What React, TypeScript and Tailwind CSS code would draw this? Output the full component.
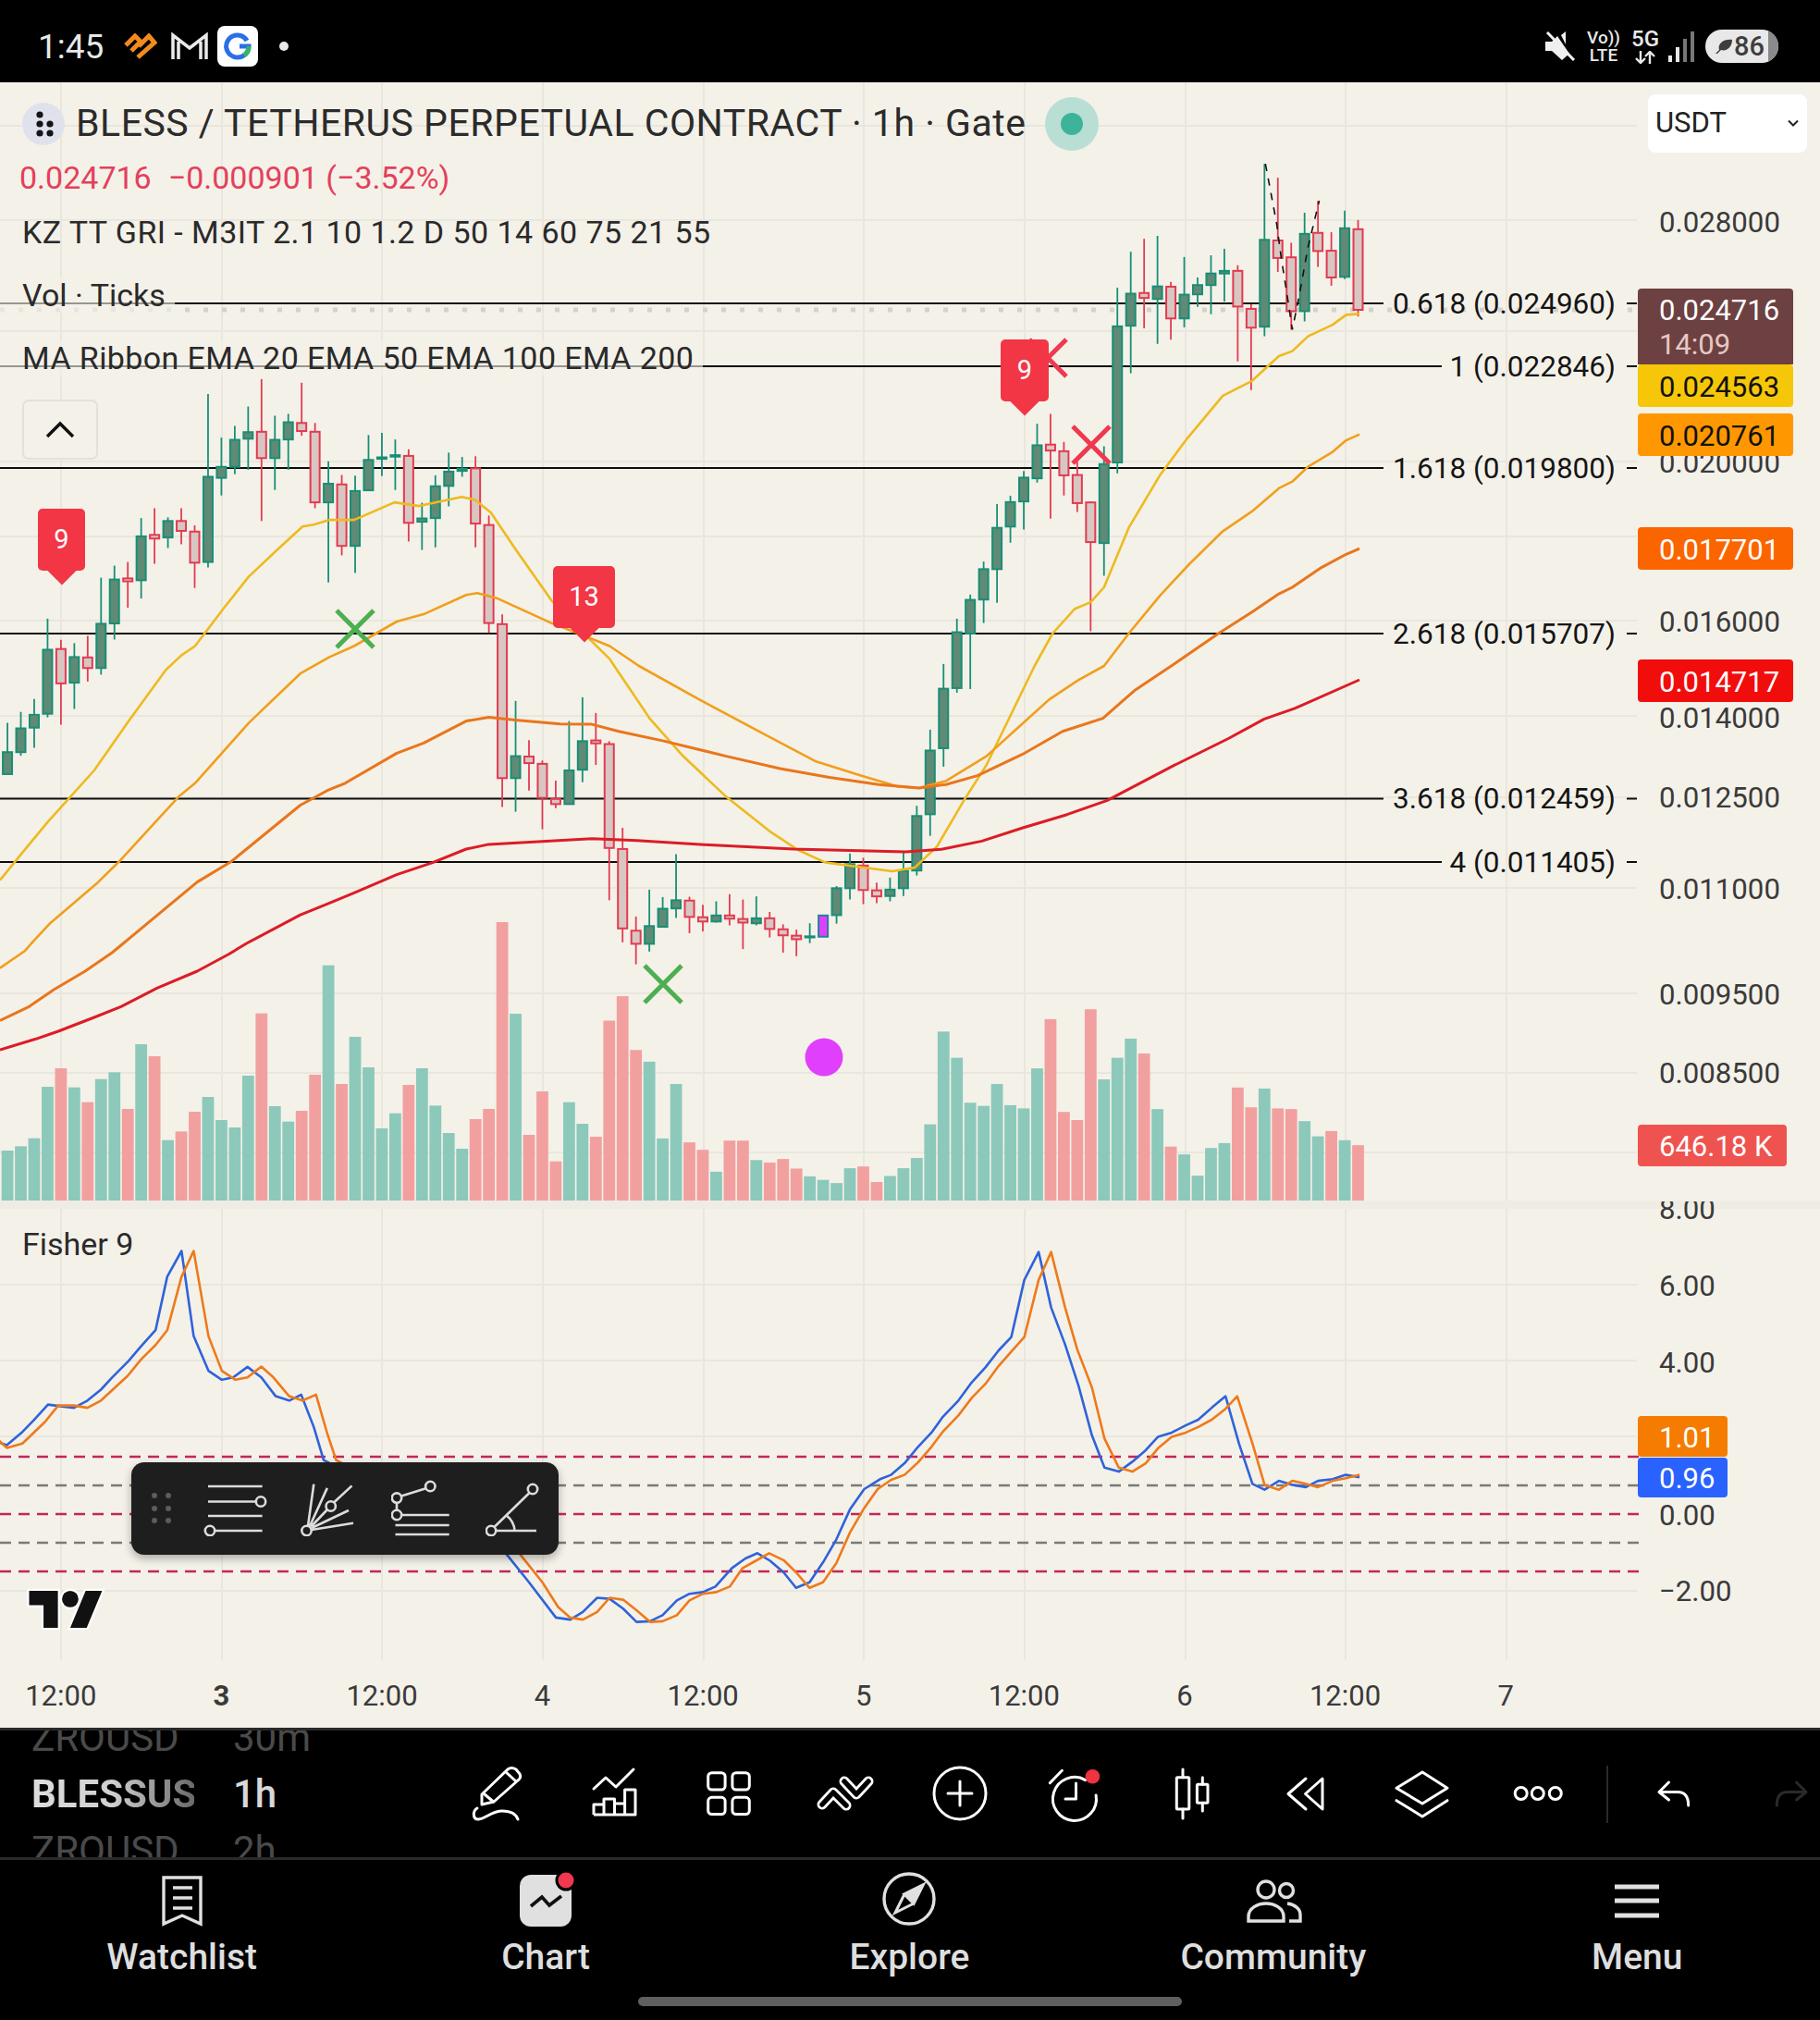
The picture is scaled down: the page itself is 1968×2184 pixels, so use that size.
import React from 'react';

type Pt = [number, number];
type Candle = [number, number, number, number, string];

// source points were read off zoomed crops, each crop has its own scale
const mapA = ([x, y]: Pt): Pt => [x / 2.063, 400 + y / 2.529];
const mapB = ([x, y]: Pt): Pt => [640 + x / 2.063, 720 + y / 2.613];
const mapC = ([x, y]: Pt): Pt => [760 + x / 2.063, 160 + y / 2.8];
const mapD = ([x, y]: Pt): Pt => [x / 2.063, 1000 + y / 3];
const mapF = ([x, y]: Pt): Pt => [x / 2.063, 1300 + y / 2.8];
const mapG = ([x, y]: Pt): Pt => [760 + x / 2.063, 1300 + y / 2.8];
const toPoints = (pts: Pt[]) => pts.map(([x, y]) => `${x.toFixed(1)},${y.toFixed(1)}`).join(' ');

const candleX = (k: number) => 65.9 + k * 14.46;

const rowsA: Candle[] = [
  [965, 1045, 1105, 1105, 'g'], [935, 980, 1045, 1055, 'g'], [900, 943, 978, 1033, 'g'], [680, 765, 940, 950, 'g'],
  [738, 763, 857, 970, 'r'], [747, 785, 855, 927, 'g'], [727, 786, 815, 852, 'r'], [568, 694, 815, 833, 'g'],
  [535, 573, 693, 737, 'g'], [525, 570, 578, 650, 'r'], [405, 455, 575, 625, 'g'], [378, 451, 461, 530, 'r'],
  [403, 413, 458, 487, 'g'], [378, 413, 440, 477, 'r'], [425, 442, 527, 596, 'r'], [66, 292, 525, 540, 'g'],
  [185, 265, 295, 343, 'g'], [153, 191, 265, 285, 'g'], [100, 170, 188, 273, 'g'], [25, 169, 241, 413, 'r'],
  [125, 191, 241, 328, 'g'], [120, 143, 190, 273, 'g'], [35, 145, 167, 180, 'r'], [145, 169, 362, 378, 'r'],
  [250, 311, 362, 581, 'g'], [287, 313, 481, 507, 'r'], [289, 331, 481, 555, 'g'], [178, 246, 329, 330, 'g'],
  [172, 239, 243, 290, 'g'], [190, 233, 237, 328, 'g'], [217, 235, 418, 469, 'r'], [363, 406, 415, 492, 'g'],
  [288, 318, 405, 485, 'g'], [226, 278, 317, 373, 'g'], [238, 270, 276, 292, 'g'], [236, 269, 420, 485, 'r'],
  [398, 424, 692, 718, 'r'], [668, 695, 1116, 1195, 'r'], [905, 1056, 1116, 1208, 'g'], [1012, 1057, 1075, 1150, 'r'],
  [1068, 1077, 1170, 1256, 'r'], [1123, 1173, 1187, 1198, 'r'], [960, 1095, 1187, 1187, 'g'], [895, 1015, 1093, 1127, 'g'],
  [938, 1013, 1021, 1080, 'r'], [1015, 1023, 1307, 1450, 'r'], [1252, 1310, 1527, 1565, 'r'],
];
const rowsB: Candle[] = [
  [708, 748, 785, 843, 'r'], [632, 735, 785, 807, 'g'], [653, 686, 737, 737, 'g'], [532, 662, 685, 712, 'g'],
  [652, 663, 709, 755, 'r'], [675, 710, 722, 750, 'r'], [665, 705, 722, 725, 'g'], [645, 705, 714, 733, 'r'],
  [660, 715, 725, 800, 'r'], [651, 713, 727, 733, 'g'], [695, 713, 743, 767, 'r'], [730, 744, 761, 810, 'r'],
  [745, 762, 772, 820, 'r'], [727, 764, 767, 783, 'g'], [705, 705, 765, 765, 'p'], [622, 628, 704, 728, 'g'],
  [530, 560, 628, 660, 'g'], [542, 564, 633, 673, 'r'], [612, 634, 651, 670, 'r'], [598, 632, 650, 665, 'g'],
  [525, 579, 628, 650, 'g'], [395, 424, 578, 592, 'g'], [180, 239, 419, 480, 'g'],
];
const rowsC: Candle[] = [
  [1562, 1637, 1817, 1873, 'g'], [1425, 1466, 1635, 1649, 'g'], [1352, 1368, 1470, 1638, 'g'], [1252, 1275, 1367, 1438, 'g'],
  [1078, 1150, 1275, 1377, 'g'], [1053, 1072, 1146, 1195, 'g'], [978, 998, 1070, 1155, 'g'], [835, 900, 1000, 1013, 'g'],
  [805, 898, 916, 1122, 'r'], [890, 918, 991, 1052, 'r'], [950, 990, 1075, 1102, 'r'], [1070, 1073, 1193, 1463, 'r'],
  [903, 957, 1196, 1295, 'g'], [423, 540, 952, 985, 'g'], [314, 441, 538, 682, 'g'], [275, 439, 454, 546, 'r'],
  [266, 419, 457, 593, 'g'], [405, 420, 516, 580, 'r'], [330, 444, 516, 543, 'g'], [392, 415, 443, 481, 'g'],
  [325, 380, 415, 503, 'g'], [305, 372, 380, 465, 'g'], [355, 372, 480, 646, 'r'], [473, 487, 544, 733, 'r'],
  [48, 278, 541, 570, 'g'], [90, 280, 333, 375, 'r'], [287, 331, 494, 550, 'r'], [196, 260, 494, 525, 'g'],
  [160, 257, 312, 360, 'r'], [255, 311, 392, 417, 'r'], [190, 243, 390, 397, 'g'], [218, 246, 490, 510, 'r'],
];

const scaleRows = (rows: Candle[], f: (v: number) => number): Candle[] =>
  rows.map(([a, b, c, d, t]) => [f(a), f(b), f(c), f(d), t]);
const candles: Candle[] = [
  ...scaleRows(rowsA, (v) => 400 + v / 2.529),
  ...scaleRows(rowsB, (v) => 720 + v / 2.613),
  ...scaleRows(rowsC, (v) => 160 + v / 2.8),
];

const volA: [number, string][] = [
  [732, 'g'], [718, 'g'], [692, 'g'], [525, 'g'], [465, 'r'], [527, 'g'], [575, 'r'], [500, 'g'], [478, 'g'], [597, 'r'],
  [387, 'g'], [426, 'r'], [698, 'g'], [670, 'r'], [606, 'r'], [558, 'g'], [633, 'g'], [657, 'g'], [489, 'g'], [287, 'r'],
  [588, 'g'], [638, 'g'], [603, 'r'], [486, 'r'], [131, 'g'], [516, 'r'], [363, 'g'], [462, 'g'], [660, 'g'], [611, 'g'],
  [519, 'r'], [465, 'g'], [586, 'g'], [675, 'g'], [726, 'g'], [630, 'r'], [597, 'r'], [-9, 'r'], [288, 'g'], [681, 'r'],
  [540, 'r'], [767, 'r'], [575, 'g'], [645, 'g'],
];
const volB: [number, string][] = [
  [1330, 'r'], [1002, 'r'], [933, 'r'], [1085, 'r'], [1118, 'g'], [1335, 'g'], [1181, 'g'], [1346, 'r'], [1367, 'r'], [1429, 'g'],
  [1341, 'r'], [1341, 'r'], [1396, 'g'], [1403, 'r'], [1393, 'r'], [1420, 'r'], [1442, 'g'], [1452, 'g'], [1461, 'g'], [1419, 'g'],
  [1414, 'r'], [1458, 'r'], [1441, 'g'], [1419, 'g'], [1390, 'g'], [1295, 'g'], [1033, 'g'], [1107, 'g'], [1234, 'g'], [1243, 'g'],
  [1181, 'g'], [1241, 'g'], [1250, 'g'], [1137, 'g'], [998, 'r'], [1260, 'r'], [1283, 'r'], [970, 'r'], [1168, 'g'], [1107, 'g'],
  [1053, 'g'], [1095, 'r'], [1252, 'g'], [1358, 'r'], [1380, 'g'], [1440, 'g'], [1362, 'g'], [1348, 'g'], [1191, 'r'], [1247, 'r'],
  [1194, 'g'], [1250, 'r'], [1252, 'r'], [1286, 'g'], [1329, 'g'], [1314, 'r'], [1340, 'g'], [1354, 'r'],
];
const volumes = [
  ...volA.map(([v, c]): [number, string] => [1000 + v / 3, c]),
  ...volB.map(([v, c]): [number, string] => [720 + v / 2.613, c]),
];

const ema20: Pt[] = [
  ...([[0, 1395], [50, 1320], [107, 1235], [155, 1170], [210, 1095], [290, 955], [370, 820], [405, 780], [435, 755], [500, 650], [555, 565], [620, 490], [675, 428], [700, 423], [735, 410], [790, 410], [880, 362], [935, 372], [1030, 347], [1060, 355], [1095, 390], [1150, 490], [1230, 630], [1310, 730], [1360, 790]] as Pt[]).map(mapA),
  ...([[50, 0], [130, 150], [200, 250], [300, 370], [400, 470], [460, 520], [520, 555], [580, 565], [670, 580], [720, 570], [770, 510], [830, 380], [880, 280]] as Pt[]).map(mapB),
  ...([[740, 1568], [780, 1470], [830, 1395], [865, 1375], [895, 1330], [950, 1150], [1020, 990], [1080, 880], [1160, 750], [1225, 705], [1285, 630], [1315, 615], [1350, 570], [1405, 535], [1435, 505], [1465, 502]] as Pt[]).map(mapC),
];
const ema50: Pt[] = [
  ...([[0, 140], [55, 85]] as Pt[]).map(mapD),
  ...([[70, 1568], [110, 1515], [215, 1405], [265, 1345], [400, 1165], [435, 1130], [555, 965], [670, 830], [735, 785], [790, 755], [885, 688], [945, 668], [1040, 615], [1065, 610], [1110, 625], [1230, 692], [1300, 725], [1360, 755]] as Pt[]).map(mapA),
  ...([[105, 0], [240, 95], [380, 190], [500, 270], [600, 310], [680, 340], [730, 345], [790, 325], [880, 255], [950, 175], [1020, 95], [1085, 40]] as Pt[]).map(mapB),
  ...([[895, 1568], [950, 1470], [1020, 1355], [1085, 1260], [1160, 1160], [1225, 1100], [1285, 1030], [1315, 1010], [1350, 965], [1405, 920], [1435, 885], [1465, 867]] as Pt[]).map(mapC),
];
const ema100: Pt[] = [
  ...([[0, 310], [65, 265], [120, 210], [190, 150], [250, 90]] as Pt[]).map(mapD),
  ...([[275, 1568], [440, 1400], [515, 1345], [670, 1190], [730, 1150], [770, 1130], [885, 1048], [945, 1020], [1040, 960], [1090, 950], [1150, 957], [1250, 968]] as Pt[]).map(mapA),
  ...([[0, 165], [60, 185], [160, 212], [300, 255], [420, 290], [530, 315], [640, 335], [730, 345], [790, 335], [860, 310], [960, 250], [1050, 185], [1140, 148], [1210, 70]] as Pt[]).map(mapB),
  ...([[1045, 1568], [1150, 1470], [1225, 1405], [1285, 1350], [1315, 1330], [1380, 1270], [1435, 1230], [1465, 1213]] as Pt[]).map(mapC),
];
const ema200: Pt[] = [
  ...([[0, 405], [80, 370], [130, 345], [210, 300], [270, 265], [350, 205], [440, 150], [510, 95]] as Pt[]).map(mapD),
  ...([[550, 1568], [670, 1490], [720, 1465], [790, 1430], [885, 1380], [965, 1347], [1040, 1310], [1090, 1297], [1200, 1290]] as Pt[]).map(mapA),
  ...([[0, 488], [100, 493], [250, 505], [450, 517], [700, 525], [780, 518], [870, 495], [960, 458], [1060, 420], [1150, 380], [1300, 280], [1420, 205], [1500, 150], [1568, 120]] as Pt[]).map(mapB),
  [1470, 735],
];

const fisherBlue: Pt[] = [
  ...([[-5, 725], [15, 735], [50, 695], [75, 660], [107, 612], [135, 617], [165, 622], [195, 600], [225, 567], [250, 530], [287, 480], [315, 435], [347, 387], [373, 225], [405, 147], [432, 405], [465, 510], [495, 537], [520, 530], [552, 498], [583, 530], [615, 587], [645, 600], [672, 582], [700, 680], [722, 780], [1130, 1065], [1180, 1150], [1240, 1257], [1272, 1263], [1300, 1240], [1332, 1197], [1360, 1200], [1390, 1230], [1420, 1270], [1450, 1268], [1478, 1250], [1510, 1205], [1538, 1185]] as Pt[]).map(mapF),
  ...([[0, 1180], [28, 1163], [65, 1107], [95, 1078], [122, 1062], [150, 1085], [180, 1120], [208, 1167], [238, 1150], [268, 1090], [298, 1020], [328, 930], [360, 868], [395, 838], [420, 825], [450, 790], [480, 740], [510, 697], [535, 650], [570, 600], [600, 545], [630, 500], [660, 448], [688, 408], [717, 235], [749, 150], [777, 318], [808, 430], [838, 555], [868, 705], [896, 803], [928, 815], [958, 785], [988, 750], [1015, 710], [1046, 697], [1077, 675], [1105, 658], [1135, 622], [1166, 587], [1196, 730], [1226, 852], [1253, 870], [1285, 843], [1315, 855], [1345, 862], [1372, 843], [1405, 838], [1434, 825], [1465, 832]] as Pt[]).map(mapG),
];
const fisherOrange: Pt[] = [
  ...([[-5, 718], [15, 743], [50, 730], [100, 665], [130, 615], [165, 615], [195, 622], [225, 600], [285, 525], [315, 475], [347, 432], [373, 387], [405, 225], [432, 147], [465, 405], [495, 510], [525, 537], [552, 530], [583, 497], [610, 530], [645, 587], [675, 600], [705, 582], [730, 700], [750, 780], [1160, 1065], [1210, 1150], [1245, 1225], [1272, 1257], [1300, 1263], [1332, 1240], [1360, 1197], [1390, 1203], [1420, 1235], [1450, 1270], [1478, 1268], [1510, 1250], [1538, 1205]] as Pt[]).map(mapF),
  ...([[0, 1185], [30, 1180], [60, 1163], [88, 1108], [118, 1085], [148, 1062], [180, 1083], [208, 1120], [238, 1167], [268, 1150], [298, 1092], [328, 1000], [358, 930], [390, 868], [420, 840], [450, 825], [480, 787], [510, 740], [535, 695], [570, 645], [600, 592], [630, 550], [660, 495], [688, 452], [717, 408], [749, 235], [777, 150], [808, 318], [835, 445], [868, 560], [896, 715], [928, 803], [958, 815], [988, 790], [1015, 745], [1046, 710], [1077, 697], [1105, 680], [1135, 658], [1166, 625], [1192, 587], [1226, 730], [1253, 855], [1285, 870], [1315, 843], [1345, 852], [1372, 862], [1405, 843], [1434, 835], [1465, 825]] as Pt[]).map(mapG),
];

const blackDash: Pt[] = ([[1255, 48], [1265, 120], [1280, 230], [1290, 330], [1305, 460], [1315, 550], [1330, 450], [1350, 300], [1375, 160]] as Pt[]).map(mapC);

const gridX = [66, 240, 413, 587, 761, 934, 1108, 1282, 1455, 1629];
const gridY = [136, 238, 358, 499, 580, 671, 774, 862, 960, 1074, 1160, 1246, 1389, 1471, 1553, 1720];
const fibLines: [number, number][] = [[328, 1496], [396, 1559], [506, 1496], [685, 1496], [863.5, 1496], [932, 1559]];

const fibLabels: [string, number][] = [
  ['0.618 (0.024960)', 329], ['1 (0.022846)', 397], ['1.618 (0.019800)', 507],
  ['2.618 (0.015707)', 686], ['3.618 (0.012459)', 864], ['4 (0.011405)', 933],
];
const axisLabels: [string, number][] = [
  ['0.028000', 241], ['0.020000', 501], ['0.016000', 673], ['0.014000', 777], ['0.012500', 863],
  ['0.011000', 962], ['0.009500', 1076], ['0.008500', 1161],
  ['6.00', 1391], ['4.00', 1474], ['0.00', 1639], ['−2.00', 1721],
];

const X = ({ x, y, color }: { x: number; y: number; color: string }) => (
  <path d={`M${x - 20} ${y - 20}L${x + 20} ${y + 20}M${x + 20} ${y - 20}L${x - 20} ${y + 20}`} stroke={color} strokeWidth={5} fill="none" />
);

function ChartDrawing() {
  return (
    <svg className="absolute inset-0" width={1968} height={1779} viewBox="0 89 1968 1779">
      {gridX.map((x) => (
        <line key={x} x1={x} x2={x} y1={89} y2={1795} stroke="#e9e6de" strokeWidth={2} />
      ))}
      {gridY.map((y) => (
        <line key={y} x1={0} x2={1770} y1={y} y2={y} stroke="#e9e6de" strokeWidth={2} />
      ))}
      <rect x={0} y={1298} width={1968} height={9} fill="#efece5" />

      {volumes.map(([top, c], i) => (
        <rect key={i} x={candleX(i - 4) - 6.4} y={top} width={12.8} height={1298 - top} fill={c === 'g' ? '#8cc9bb' : '#f2a09f'} />
      ))}

      {fibLines.map(([y, end]) => (
        <g key={y} stroke="#0d0d0d" strokeWidth={2}>
          <line x1={0} x2={end} y1={y} y2={y} />
          <line x1={1759} x2={1770} y1={y} y2={y} />
        </g>
      ))}
      <line x1={0} x2={1770} y1={335} y2={335} stroke="#d6d2ca" strokeWidth={5} strokeDasharray="5 15" />

      {candles.map(([wt, bt, bb, wb, t], i) => {
        const x = candleX(i - 4);
        const edge = t === 'g' ? '#178f76' : t === 'r' ? '#e23b50' : '#22809e';
        const fill = t === 'g' ? '#5f8a75' : t === 'r' ? '#d8c6c3' : '#e040fb';
        return (
          <g key={i}>
            <line x1={x} x2={x} y1={wt} y2={wb} stroke={edge} strokeWidth={1.8} />
            <rect x={x - 5} y={bt} width={10} height={Math.max(bb - bt, 1)} fill={fill} stroke={edge} strokeWidth={2} />
          </g>
        );
      })}
      <polyline points={toPoints(blackDash)} fill="none" stroke="#111" strokeWidth={1.6} strokeDasharray="8 8" />

      <polyline points={toPoints(ema20)} fill="none" stroke="#eeba1f" strokeWidth={2.6} strokeLinejoin="round" />
      <polyline points={toPoints(ema50)} fill="none" stroke="#f09f1c" strokeWidth={2.6} strokeLinejoin="round" />
      <polyline points={toPoints(ema100)} fill="none" stroke="#e9761c" strokeWidth={3} strokeLinejoin="round" />
      <polyline points={toPoints(ema200)} fill="none" stroke="#dc1c26" strokeWidth={3} strokeLinejoin="round" />

      <X x={384} y={680} color="#4caf50" />
      <X x={717} y={1064} color="#4caf50" />
      <X x={1180} y={481} color="#f0384e" />
      <X x={1133} y={387} color="#f0384e" />
      <circle cx={891} cy={1143} r={20.5} fill="#e040fb" />

      {[1575, 1637, 1699].map((y) => (
        <line key={y} x1={0} x2={1772} y1={y} y2={y} stroke="#c2275a" strokeWidth={2.4} strokeDasharray="12 8" />
      ))}
      {[1606, 1668].map((y) => (
        <line key={y} x1={0} x2={1772} y1={y} y2={y} stroke="#7a7a7a" strokeWidth={2.4} strokeDasharray="12 8" />
      ))}
      <polyline points={toPoints(fisherBlue)} fill="none" stroke="#2f63d9" strokeWidth={2.6} strokeLinejoin="round" />
      <polyline points={toPoints(fisherOrange)} fill="none" stroke="#ee7a1b" strokeWidth={2.6} strokeLinejoin="round" />
    </svg>
  );
}

function Flag({ x, y, w, h, label }: { x: number; y: number; w: number; h: number; label: string }) {
  return (
    <div
      className="absolute flex items-center justify-center rounded-[5px] bg-[#f23645] text-[29px] leading-none text-white"
      style={{ left: x, top: y - 89, width: w, height: h }}
    >
      <span className="relative z-10">{label}</span>
      <div className="absolute bottom-[-11px] left-1/2 h-[22px] w-[22px] -translate-x-1/2 rotate-45 bg-[#f23645]" />
    </div>
  );
}

function Pill({ top, height, color, text, bg, width = 168 }: { top: number; height: number; color: string; text: string; bg: string; width?: number }) {
  return (
    <div
      className="absolute left-[1771px] flex items-center rounded-[4px] pl-[23px] pt-[2px] text-[31px] leading-none"
      style={{ top: top - 89, height, width, background: bg, color }}
    >
      {text}
    </div>
  );
}

function DrawingToolbar() {
  return (
    <div className="absolute left-[142px] top-[1492px] flex h-[100px] w-[462px] items-center gap-[33px] rounded-[14px] bg-[#1e1e1e] pl-[21px] shadow-[0_4px_10px_rgba(0,0,0,0.3)]">
      <svg width={24} height={40} viewBox="0 0 24 40" fill="#5c5c5c">
        {[6, 20, 33].map((y) => (
          <g key={y}>
            <circle cx={4} cy={y} r={3} />
            <circle cx={19} cy={y} r={3} />
          </g>
        ))}
      </svg>
      <svg width={72} height={60} viewBox="0 0 72 60" fill="none" stroke="#dcdcdc" strokeWidth={2.6}>
        <path d="M5 6H63.6M5 22.5H56.5M5 38H63.6M12.5 54H63.6" />
        <circle cx={62} cy={22.5} r={5.2} />
        <circle cx={7} cy={54} r={5.2} />
      </svg>
      <svg width={65} height={60} viewBox="0 0 65 60" fill="none" stroke="#dcdcdc" strokeWidth={2.6}>
        <path d="M8 49L14.3 3.6M10 49L28.8 7.9M11 50L29 31M36 23.5L55.5 5.4M12 51L52 32M12 53L57 45.7" />
        <circle cx={6.5} cy={54} r={5.2} />
        <circle cx={32.7} cy={27.5} r={5.2} />
      </svg>
      <svg width={69} height={62} viewBox="0 0 69 62" fill="none" stroke="#dcdcdc" strokeWidth={2.6}>
        <path d="M11 17.5L37.5 9.2M6 25V32.5M12 38H62.7M4.5 49H62.7M4.5 59H62.7" />
        <circle cx={42.3} cy={7} r={5.2} />
        <circle cx={6} cy={19.6} r={5.2} />
        <circle cx={6} cy={38} r={5.2} />
      </svg>
      <svg width={60} height={60} viewBox="0 0 60 60" fill="none" stroke="#dcdcdc" strokeWidth={2.6}>
        <path d="M9.5 50L47.5 13M12 54H55M22.7 37.5Q31 44 31.5 54" />
        <circle cx={6} cy={54} r={5.2} />
        <circle cx={51} cy={9} r={5.2} />
      </svg>
    </div>
  );
}

function ChartArea() {
  return (
    <div className="relative flex h-[1779px] flex-col overflow-hidden bg-[#f4f1e9] text-[#2a2a2a]">
      <ChartDrawing />

      {/* Legend */}
      <div className="relative z-10 flex flex-col items-start">
        <div className="ml-6 mt-[22px] flex h-[46px] items-center">
          <svg width={46} height={46} viewBox="0 0 46 46" className="shrink-0">
            <circle cx={23} cy={23} r={23} fill="#dfe2ec" />
            <g fill="#141414">
              <circle cx={19} cy={13} r={3.6} />
              <circle cx={19} cy={23} r={3.6} />
              <circle cx={30} cy={23} r={3.6} />
              <circle cx={19} cy={33} r={3.6} />
              <circle cx={30} cy={33} r={3.6} />
            </g>
          </svg>
          <span className="ml-3 -translate-y-px whitespace-nowrap text-[41px] leading-none tracking-[0.5px] text-[#2b2b2b]">
            BLESS / TETHERUS PERPETUAL CONTRACT · 1h · Gate
          </span>
          <div className="ml-[21px] flex h-[58px] w-[58px] items-center justify-center rounded-full bg-[#b9dfd4]">
            <div className="h-[24px] w-[24px] rounded-full bg-[#3db39b]" />
          </div>
        </div>
        <div className="ml-[21px] mt-[16px] flex h-[38px] items-center gap-[18px] whitespace-nowrap text-[34px] leading-none text-[#e4405a]">
          <span>0.024716</span>
          <span>−0.000901 (−3.52%)</span>
        </div>
        <div className="ml-6 mt-[21px] flex h-[38px] items-center whitespace-nowrap text-[34px] leading-none tracking-[0.45px]">
          KZ TT GRI - M3IT 2.1 10 1.2 D 50 14 60 75 21 55
        </div>
        <div className="mt-[30px] flex h-[38px] items-center whitespace-nowrap bg-[#f4f1e9]/60 pl-6 pr-2.5 text-[34px] leading-none">
          Vol · Ticks
        </div>
        <div className="mt-[30px] flex h-[38px] items-center whitespace-nowrap bg-[#f4f1e9]/60 pl-6 pr-2.5 text-[34px] leading-none tracking-[0.4px]">
          MA Ribbon EMA 20 EMA 50 EMA 100 EMA 200
        </div>
        <div className="ml-6 mt-[26px] flex h-[65px] w-[82px] items-center justify-center rounded-[7px] border-2 border-[#e4e1da] bg-[#f4f1e9]">
          <svg width={32} height={20} viewBox="0 0 32 20" fill="none" stroke="#111" strokeWidth={3.4}>
            <path d="M2 17L16 3L30 17" />
          </svg>
        </div>
      </div>

      {/* USDT selector */}
      <div className="absolute left-[1782px] top-[13px] flex h-[63px] w-[172px] items-center justify-between rounded-[8px] bg-white pb-[2px] pl-[8px] pr-[9px] text-[31px] leading-none text-[#222]">
        USDT
        <svg width={12} height={8} viewBox="0 0 12 8" fill="none" stroke="#222" strokeWidth={2}>
          <path d="M1 1.5L6 6.5L11 1.5" />
        </svg>
      </div>

      {/* Fibonacci levels and price scale */}
      {fibLabels.map(([text, y]) => (
        <span key={text} className="absolute right-[221px] -translate-y-1/2 whitespace-nowrap text-[31.5px] leading-none text-[#151515]" style={{ top: y - 89 }}>
          {text}
        </span>
      ))}
      {axisLabels.map(([text, y]) => (
        <span key={text} className="absolute left-[1794px] -translate-y-1/2 whitespace-nowrap text-[31.2px] leading-none text-[#3a3a3a]" style={{ top: y - 89 }}>
          {text}
        </span>
      ))}
      <div className="absolute left-[1794px] top-[1210px] flex h-[24px] items-end overflow-hidden text-[31.2px] leading-none text-[#3a3a3a]">
        <span>8.00</span>
      </div>

      <div className="absolute left-[1771px] top-[223px] flex h-[82px] w-[168px] flex-col justify-center gap-[6px] rounded-t-[4px] bg-[#6d4141] pl-[23px] pt-[1px] text-[31px] leading-none text-white">
        <span>0.024716</span>
        <span className="text-[#e6c8c5]">14:09</span>
      </div>
      <Pill top={394} height={46} bg="#f5c708" color="#111" text="0.024563" />
      <Pill top={447} height={46} bg="#ff9800" color="#111" text="0.020761" />
      <Pill top={570} height={46} bg="#fb6500" color="#fff" text="0.017701" />
      <Pill top={713} height={46} bg="#f20d0d" color="#fff" text="0.014717" />
      <Pill top={1216} height={45} bg="#ef5350" color="#fff" text="646.18 K" width={161} />
      <Pill top={1531} height={44} bg="#f57c00" color="#fff" text="1.01" width={97} />
      <Pill top={1576} height={43} bg="#2962ff" color="#fff" text="0.96" width={97} />

      <Flag x={41} y={550} w={51} h={67} label="9" />
      <Flag x={598} y={612} w={67} h={67} label="13" />
      <Flag x={1082} y={367} w={52} h={67} label="9" />

      <span className="absolute left-6 top-[1239px] text-[34px] leading-[34px]">Fisher 9</span>

      <DrawingToolbar />

      <svg className="absolute left-[31px] top-[1631px] overflow-visible" width={81} height={40} viewBox="0 4 36 18">
        <g fill="#111" stroke="#fff" strokeWidth={2} style={{ paintOrder: 'stroke' }}>
          <path d="M14 22H7V11H0V4h14v18z" />
          <path d="M28 22h-8l7.5-18h8L28 22z" />
          <circle cx={20} cy={8} r={4} />
        </g>
      </svg>

      {/* Time scale */}
      <div className="relative z-10 ml-[-21px] mt-auto flex h-[73px] items-center pt-[4px] text-[31px] leading-none text-[#3a3a3a]">
        {['12:00', '3', '12:00', '4', '12:00', '5', '12:00', '6', '12:00', '7'].map((t, i) => (
          <span key={i} className={`w-[173.6px] text-center ${t === '3' ? 'font-bold' : ''}`}>
            {t}
          </span>
        ))}
      </div>
    </div>
  );
}

function ToolIcon({ children }: { children: React.ReactNode }) {
  return (
    <div className="flex w-[124.6px] shrink-0 items-center justify-center">
      <svg className="-mt-[3px]" width={70} height={70} viewBox="0 0 70 70" fill="none" stroke="#fff" strokeWidth={3} strokeLinejoin="round" strokeLinecap="round">
        {children}
      </svg>
    </div>
  );
}

function PickerRow({ sym, tf, active }: { sym: string; tf: string; active?: boolean }) {
  return (
    <div className="flex h-[61px] shrink-0 items-center text-[42px] leading-none">
      <span
        className={`w-[176px] shrink-0 overflow-hidden whitespace-nowrap ${
          active ? 'bg-gradient-to-r from-[#dedede] via-[#d0d0d0] to-[#6a6a6a] bg-clip-text font-bold text-transparent' : 'text-[#4a4a4a]'
        }`}
      >
        {sym}
      </span>
      <span className={`ml-[42px] ${active ? 'font-medium text-[#d8d8d8]' : 'text-[#4a4a4a]'}`}>{tf}</span>
    </div>
  );
}

function Toolbar() {
  return (
    <div className="flex h-[143px] items-center overflow-hidden border-y-[3px] border-[#2a2a2a] bg-black">
      <div className="flex h-full w-[477px] shrink-0 flex-col justify-center overflow-hidden pl-[34px]">
        <PickerRow sym="ZROUSD" tf="30m" />
        <PickerRow sym="BLESSUS" tf="1h" active />
        <PickerRow sym="ZROUSD" tf="2h" />
      </div>

      <ToolIcon>
        <path d="M17 48V37L45 10Q49 7 54 10L58 15Q60 19 56 22L30 45Z" />
        <path d="M20 37L29.5 45M43 13L54 23" />
        <path d="M12 52C7 55 7 64 13 64C20 64 28 55 39 55C48 55 54 58 56 64" />
      </ToolIcon>
      <ToolIcon>
        <path d="M13 31L26 19L37 29L56 10" />
        <path d="M13 59V48H24V42H35.5V59M24 48V59M35.5 47H46.6V59M46.6 47V32H58V59H13" strokeLinecap="butt" />
      </ToolIcon>
      <ToolIcon>
        <rect x={12.7} y={13.7} width={18.4} height={18.3} rx={4} />
        <rect x={38.9} y={13.7} width={18.4} height={18.3} rx={4} />
        <rect x={12.7} y={40.3} width={18.4} height={18.3} rx={4} />
        <rect x={38.9} y={40.3} width={18.4} height={18.3} rx={4} />
      </ToolIcon>
      <ToolIcon>
        <path d="M11 48L23 35L37 49" stroke="#fff" strokeWidth={11} />
        <path d="M11 48L23 35L37 49" stroke="#000" strokeWidth={5.5} />
        <path d="M35 23L48 37L61 23" stroke="#fff" strokeWidth={11} />
        <path d="M35 23L48 37L61 23" stroke="#000" strokeWidth={5.5} />
      </ToolIcon>
      <ToolIcon>
        <circle cx={35} cy={36} r={28} />
        <path d="M35 23V49M22 36H48" />
      </ToolIcon>
      <ToolIcon>
        <path d="M46.7 21.6A23.5 23.5 0 1 0 58.1 37.9" />
        <path d="M36.5 25V42H25M21.4 11.3L8.3 24.7" />
        <circle cx={54.4} cy={17.7} r={7.8} fill="#ef3340" stroke="none" />
      </ToolIcon>
      <ToolIcon>
        <rect x={20.3} y={18.7} width={13.5} height={34.3} rx={1} />
        <rect x={42.4} y={26.3} width={11.6} height={20} rx={1} />
        <path d="M27 10V18.7M27 53V63M48.3 18.7V26.3M48.3 46.3V55" />
      </ToolIcon>
      <ToolIcon>
        <path d="M36 20L17 36.5L36 53" />
        <path d="M54 20L35.5 36.5L54 53Z" />
      </ToolIcon>
      <ToolIcon>
        <path d="M37 13L64 30.3L37 47L9 30.3Z" />
        <path d="M9 43.7L37 61L64 43.7" />
      </ToolIcon>
      <ToolIcon>
        <circle cx={18.7} cy={36} r={6.5} />
        <circle cx={36.8} cy={36} r={6.5} />
        <circle cx={55.8} cy={36} r={6.5} />
      </ToolIcon>
      <div className="ml-[14px] h-[62px] w-[2px] shrink-0 bg-[#2a2a2a]" />
      <div className="ml-[8px]">
        <ToolIcon>
          <path d="M30.5 24L20 34.5L30.5 43M20 34.5H40Q51.7 34.5 51.7 49" />
        </ToolIcon>
      </div>
      <div className="ml-[4px]">
        <ToolIcon>
          <g stroke="#2a2a2a">
            <path d="M39.5 24L50 34.5L39.5 43M50 34.5H30Q18.3 34.5 18.3 49" />
          </g>
        </ToolIcon>
      </div>
    </div>
  );
}

function NavItem({ label, children }: { label: string; children: React.ReactNode }) {
  return (
    <div className="flex flex-col items-center">
      <svg width={70} height={60} viewBox="0 0 70 60" fill="none" stroke="#e0e0e0" strokeWidth={3.4}>
        {children}
      </svg>
      <span className="mt-[11px] text-[39px] font-medium leading-[44px] text-[#dedede]">{label}</span>
    </div>
  );
}

function BottomNav() {
  return (
    <div className="flex h-[173px] flex-col bg-black pt-[12px]">
      <div className="grid grid-cols-5 pr-[1px]">
        <NavItem label="Watchlist">
          <path d="M15 7H55V57L35 48L15 57Z" />
          <path d="M25 18H46M25 29H46M25 40H46" />
        </NavItem>
        <NavItem label="Chart">
          <rect x={7} y={4} width={56} height={56} rx={12} fill="#e0e0e0" stroke="none" />
          <path d="M19 38L31 28L39 37L52 27" stroke="#111" strokeWidth={3.6} />
          <circle cx={57} cy={10} r={10} fill="#f0384e" stroke="#000" strokeWidth={3} />
        </NavItem>
        <NavItem label="Explore">
          <circle cx={35} cy={30} r={27} />
          <path d="M50 15L40 35L30 25Z" fill="#e0e0e0" />
          <path d="M40 35L20 45L30 25" strokeWidth={3} />
        </NavItem>
        <NavItem label="Community">
          <circle cx={27} cy={20} r={9} />
          <circle cx={49} cy={21} r={7.5} />
          <path d="M8 54V49C8 40 18 35 27 35C36 35 46 40 46 49V54Z" />
          <path d="M50 35C58 36 64 41 64 47V54H52" />
        </NavItem>
        <NavItem label="Menu">
          <path d="M11 17H59M11 32H59M11 48H59" strokeWidth={5} />
        </NavItem>
      </div>
      <div className="mx-auto mt-[21px] h-[10px] w-[588px] rounded-full bg-[#5f5f5f]" />
    </div>
  );
}

function StatusBar() {
  return (
    <div className="flex h-[89px] items-center justify-between bg-black pl-[41px] pr-[45px] pt-[11px] text-[#e8e8e8]">
      <div className="flex items-center">
        <span className="text-[37px] leading-none">1:45</span>
        <svg className="ml-[22px]" width={36} height={28} viewBox="0 0 36 28" fill="none" stroke="#f28a1c" strokeWidth={5}>
          <path d="M2 13L12 3L18 9L8 19M15 26L33 10L27 3L16 14" />
        </svg>
        <svg className="ml-[14px]" width={42} height={32} viewBox="0 0 42 32" fill="none" stroke="#eaeaea" strokeWidth={3.5}>
          <path d="M3 30V4L21 18L39 4V30M9 30V11M33 30V11" />
        </svg>
        <div className="ml-[9px] flex h-[44px] w-[44px] items-center justify-center rounded-[8px] bg-white">
          <svg width={30} height={30} viewBox="0 0 30 30" fill="none" strokeWidth={5}>
            <path d="M25 9A12 12 0 1 0 15 27A12 12 0 0 0 27 15H17" stroke="#2a6fe8" />
            <path d="M27 15A12 12 0 0 1 22 25" stroke="#34b36b" />
          </svg>
        </div>
        <div className="ml-[23px] h-[10px] w-[10px] rounded-full bg-[#eaeaea]" />
      </div>
      <div className="flex items-center">
        <svg width={34} height={32} viewBox="0 0 34 32" fill="#efefef">
          <path d="M1 11H8L14 5L27 24L19 31L8 21H1Z" />
          <path d="M18 4L23 0V14Z" />
          <path d="M3 1L32 31" stroke="#efefef" strokeWidth={3} />
        </svg>
        <div className="ml-[14px] flex w-[32px] flex-col items-center text-[19px] font-medium leading-[19px]">
          <span>Vo))</span>
          <span>LTE</span>
        </div>
        <div className="ml-[14px] flex w-[30px] flex-col items-center">
          <span className="text-[24px] font-medium leading-[20px]">5G</span>
          <svg className="mt-[3px]" width={22} height={14} viewBox="0 0 22 14" fill="none" stroke="#e8e8e8" strokeWidth={2.4}>
            <path d="M6 0V12M1 8L6 13L11 8M16 14V2M11 6L16 1L21 6" />
          </svg>
        </div>
        <svg className="ml-[9px]" width={32} height={33} viewBox="0 0 32 33">
          <rect x={1} y={26} width={4} height={7} fill="#e8e8e8" />
          <rect x={9} y={17} width={4} height={16} fill="#e8e8e8" />
          <rect x={17} y={8} width={4} height={25} fill="#777" />
          <rect x={25} y={0} width={4} height={33} fill="#777" />
        </svg>
        <div className="ml-[9px] flex h-[36px] w-[79px] items-center overflow-hidden rounded-full bg-[#e8e8e8] pl-[10px] text-[#3e3e3e]">
          <svg width={20} height={18} viewBox="0 0 20 18" fill="#3e3e3e">
            <path d="M1 17L5 13C3 6 10 1 19 2C19 10 13 15 7 13L3 17Z" />
          </svg>
          <span className="ml-[1px] text-[29px] font-medium leading-none">86</span>
          <div className="ml-auto h-full w-[11px] bg-[#8a8a8a]" />
        </div>
      </div>
    </div>
  );
}

export default function App() {
  return (
    <div className="h-[2184px] w-[1968px] overflow-hidden bg-black font-['Roboto',sans-serif]">
      <StatusBar />
      <ChartArea />
      <Toolbar />
      <BottomNav />
    </div>
  );
}
